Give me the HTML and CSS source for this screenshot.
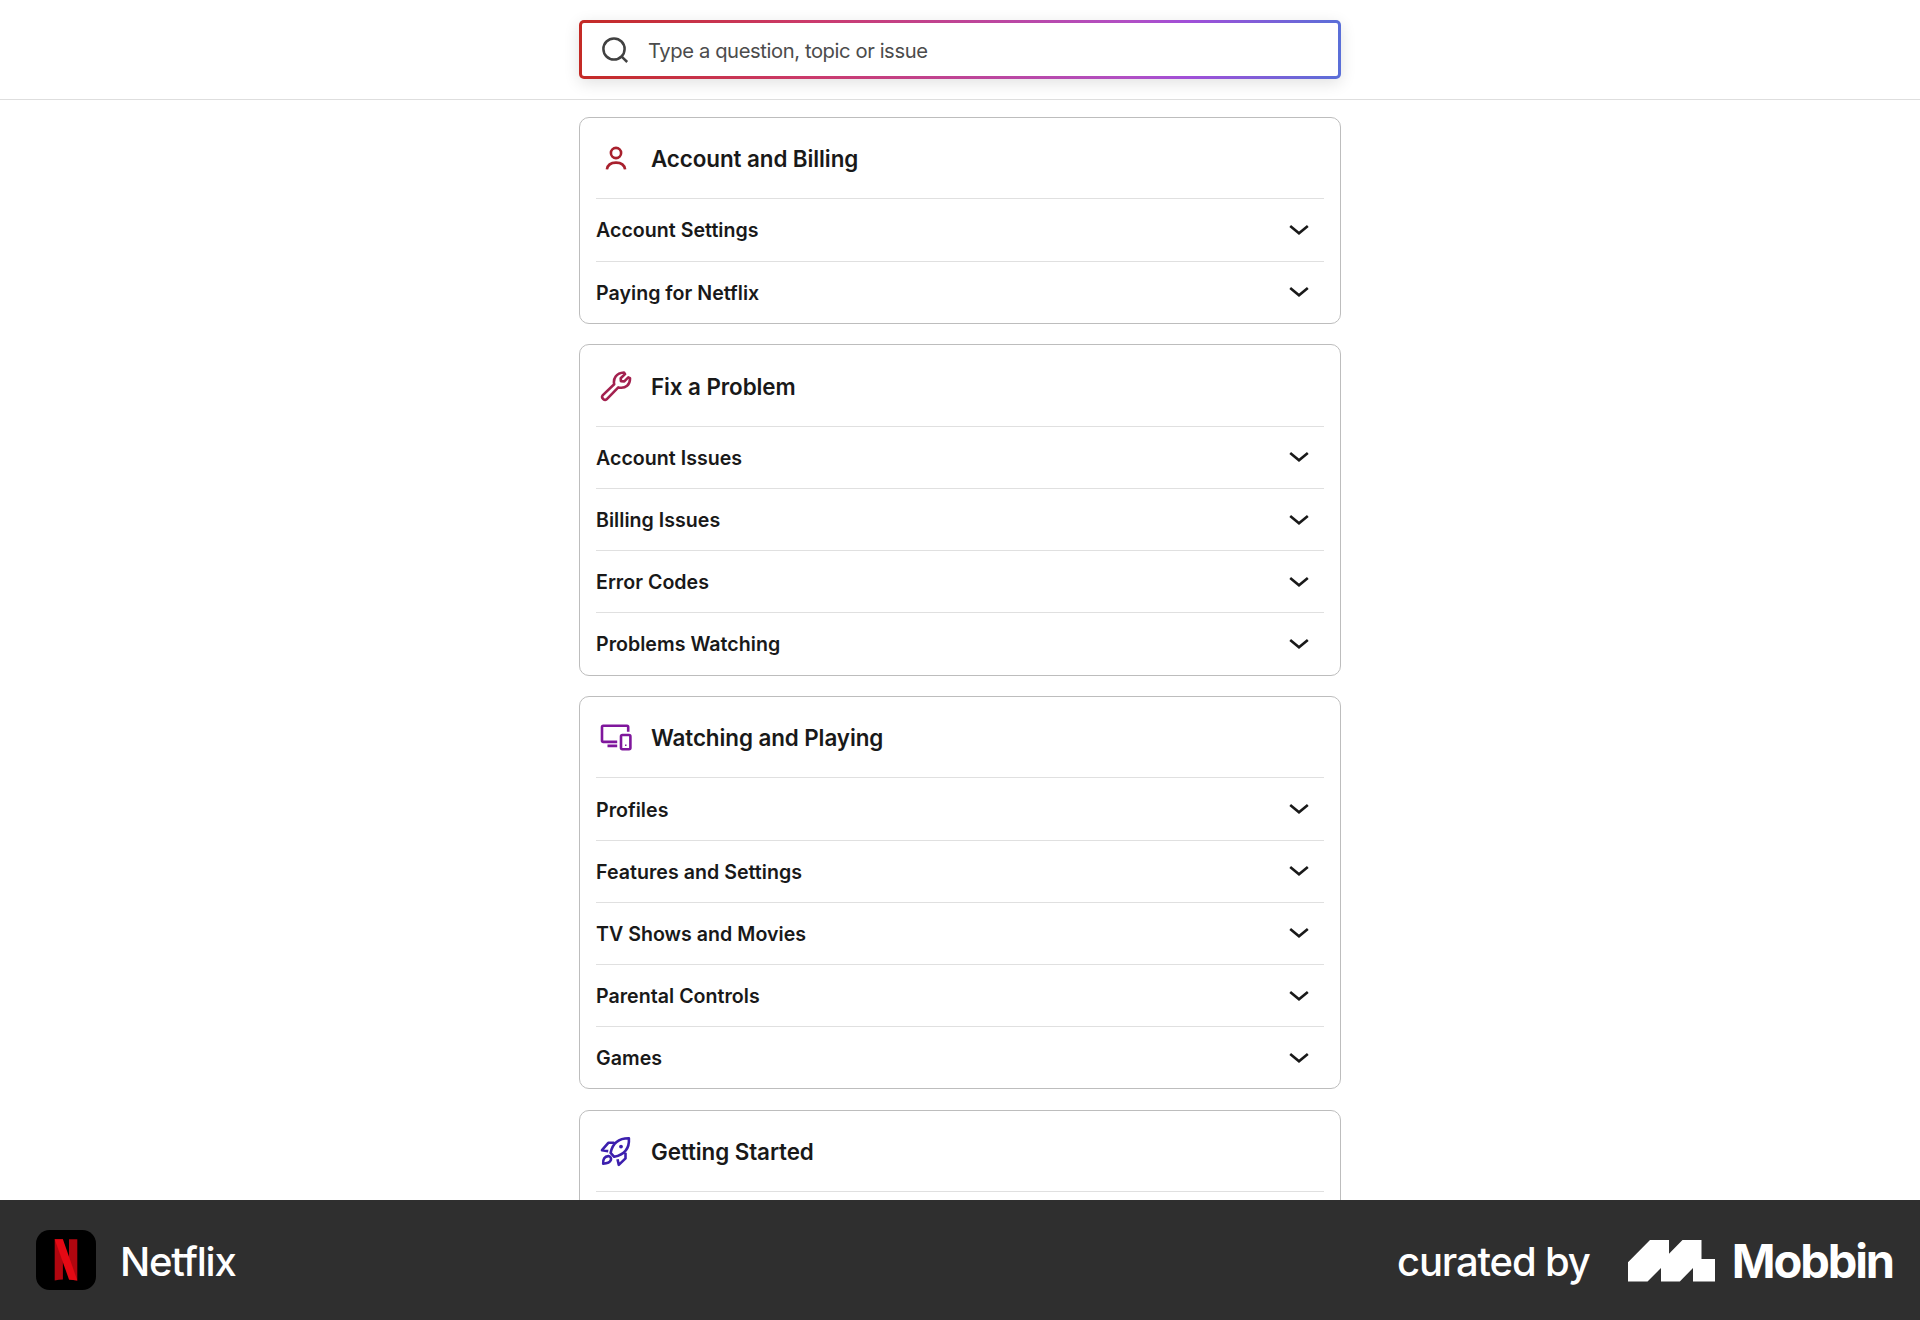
FILE: index.html
```html
<!DOCTYPE html>
<html lang="en">
<head>
<meta charset="utf-8">
<title>Netflix Help Center</title>
<link rel="stylesheet" href="styles.css">
</head>
<body>
<svg class="sprite" aria-hidden="true">
  <symbol id="chevron" viewBox="0 0 24 14"><path d="M3.2 3 12 10.3 20.8 3" fill="none" stroke="#191919" stroke-width="2.6"/></symbol>
</svg>
<div class="page">
  <header class="topbar">
    <div class="search">
      <svg class="search-icon" viewBox="0 0 32 32"><circle cx="15" cy="15" r="10.6"/><path d="M22.4 22.4 28.2 28"/></svg>
      <span class="placeholder">Type a question, topic or issue</span>
    </div>
  </header>
  <main class="topics">
    <section class="card">
      <h2 class="card-head">
        <svg class="icon account" viewBox="0 0 32 32"><circle cx="16" cy="11" r="5.1"/><path d="M6.9 27.4C7.6 22.8 11 20.6 16 20.6S24.4 22.8 25.1 27.4"/></svg>
        <span class="title">Account and Billing</span>
      </h2>
      <div class="row"><span class="label">Account Settings</span><svg class="chevron"><use href="#chevron"/></svg></div>
      <div class="row"><span class="label">Paying for Netflix</span><svg class="chevron"><use href="#chevron"/></svg></div>
    </section>
    <section class="card">
      <h2 class="card-head">
        <svg class="icon wrench" viewBox="0 0 32 32"><path d="M14.2 14.3C13 9 16 3 24 2.5L25 4.1 20.7 8.3 20.9 11.2 24.3 11.4 28.3 7.4 30 8.2C30.2 14.5 26 19 18.3 17.4L6.6 29.3C4.6 31 .8 28 2.6 25.4Z"/></svg>
        <span class="title">Fix a Problem</span>
      </h2>
      <div class="row"><span class="label">Account Issues</span><svg class="chevron"><use href="#chevron"/></svg></div>
      <div class="row"><span class="label">Billing Issues</span><svg class="chevron"><use href="#chevron"/></svg></div>
      <div class="row"><span class="label">Error Codes</span><svg class="chevron"><use href="#chevron"/></svg></div>
      <div class="row"><span class="label">Problems Watching</span><svg class="chevron"><use href="#chevron"/></svg></div>
    </section>
    <section class="card">
      <h2 class="card-head">
        <svg class="icon devices" viewBox="0 0 32 32"><path d="M17.2 20.9H3.2Q2 20.9 2 19.7V6Q2 4.8 3.2 4.8H27Q28.2 4.8 28.2 6V10.8M7.5 24.9H17.2"/><rect x="21" y="14" width="9.4" height="14.2" rx="1.4"/><path class="dot" d="M25 23.4h1.5v1.5H25z"/></svg>
        <span class="title">Watching and Playing</span>
      </h2>
      <div class="row"><span class="label">Profiles</span><svg class="chevron"><use href="#chevron"/></svg></div>
      <div class="row"><span class="label">Features and Settings</span><svg class="chevron"><use href="#chevron"/></svg></div>
      <div class="row"><span class="label">TV Shows and Movies</span><svg class="chevron"><use href="#chevron"/></svg></div>
      <div class="row"><span class="label">Parental Controls</span><svg class="chevron"><use href="#chevron"/></svg></div>
      <div class="row"><span class="label">Games</span><svg class="chevron"><use href="#chevron"/></svg></div>
    </section>
    <section class="card">
      <h2 class="card-head">
        <svg class="icon rocket" viewBox="0 0 32 32"><path d="M14.2 21.8 10.6 17.9C12.5 8.6 18 3.2 28.9 3.3 29.6 13.6 24 19.6 14.2 21.8ZM14.3 7.8H8.3L2 15.2 8.2 16.1M25.5 17.8V23.4L18.8 29.9 17.5 24.2M3.2 28.8C2.6 24.2 4.8 21 8.4 21.1 12.7 22 12.4 28.2 3.2 28.8Z"/><circle class="dot" cx="21" cy="11.6" r="1.9"/></svg>
        <span class="title">Getting Started</span>
      </h2>
      <div class="row"></div>
    </section>
  </main>
</div>
<footer class="credit">
  <svg class="app-logo" viewBox="0 0 60 60"><rect width="60" height="60" rx="13.5" fill="#000"/><path d="M18.7 9.2h8.2V49.6q-4 .2-8.2.8zM33 9.2h8.3V50.4L33 49.4z" fill="#b1060f"/><path d="M18.7 9.2h8.2L41.3 50.4 33 49.5z" fill="#e50914"/></svg>
  <span class="app-name">Netflix</span>
  <span class="curated">curated by</span>
  <svg class="mobbin-mark" viewBox="0 0 87 42"><path d="M22 0H41V13.7L54.5 0H73.5V19H87V41.5H65V28L51.8 41.5H33V28L19.5 41.5H0V22.3Z" fill="#fff"/></svg>
  <span class="mobbin">Mobbin</span>
</footer>
</body>
</html>
```
FILE: styles.css
```css
* { box-sizing: border-box; }
body {
  margin: 0;
  height: 1320px;
  display: flex;
  flex-direction: column;
  overflow: hidden;
  background: #fff;
  color: #191919;
  font-family: Inter, "Liberation Sans", sans-serif;
}
.sprite { display: none; }
.page { height: 1200px; overflow: hidden; }
.topbar {
  height: 100px;
  padding-top: 20px;
  border-bottom: 1px solid #dedede;
}
.search {
  width: 762px;
  height: 59px;
  margin: 0 auto;
  padding-left: 17px;
  display: flex;
  align-items: center;
  border: 3px solid transparent;
  border-radius: 5px;
  background:
    linear-gradient(#fff, #fff) padding-box,
    linear-gradient(90deg, #c42a25 0%, #cb3a6b 30%, #b14fc4 72%, #a04fd8 80%, #5a6fd8 100%) border-box;
  box-shadow: 0 4px 16px rgba(0, 0, 0, .12);
}
.search-icon {
  width: 32px;
  height: 32px;
  fill: none;
  stroke: #414141;
  stroke-width: 2.5;
}
.placeholder {
  margin-left: 17px;
  padding-top: 1px;
  color: #4c4c4c;
  font-size: 20.2px;
  letter-spacing: -.4px;
}
.topics {
  width: 762px;
  margin: 17px auto 0;
  display: flex;
  flex-direction: column;
  gap: 20.6px;
}
.card {
  padding: 0 16px;
  border: 1px solid #bdbdbd;
  border-radius: 10px;
}
.card-head {
  height: 80.4px;
  margin: 0;
  padding-left: 4px;
  display: flex;
  align-items: center;
  gap: 19px;
}
.title {
  padding-top: 1px;
  font-size: 22.4px;
  font-weight: 600;
  letter-spacing: -.08px;
}
.icon {
  width: 32px;
  height: 32px;
  fill: none;
  stroke-width: 2.6;
}
.icon .dot { stroke: none; }
.account { stroke: #a8202d; }
.wrench { stroke: #a3214f; stroke-linejoin: round; }
.devices { stroke: #7f169c; }
.devices .dot { fill: #7f169c; }
.rocket { stroke: #3c1fae; stroke-linejoin: round; }
.rocket .dot { fill: #3c1fae; }
.row {
  height: 62.2px;
  padding-right: 13px;
  display: flex;
  align-items: center;
  justify-content: space-between;
  border-top: 1px solid #e0e0e0;
  font-size: 19.6px;
  font-weight: 600;
  letter-spacing: .02px;
}
.label { padding-top: 1px; }
.chevron { width: 24px; height: 14px; }
.credit {
  height: 120px;
  padding: 0 27px 0 36px;
  display: flex;
  align-items: center;
  background: #2f2f2f;
  color: #fff;
  font-size: 40px;
  font-weight: 500;
}
.app-logo { width: 60px; height: 60px; }
.app-name { margin-left: 24px; padding-top: 2px; letter-spacing: -1.2px; }
.curated { margin-left: auto; padding-top: 2px; letter-spacing: -1.15px; }
.mobbin-mark { width: 87px; height: 42px; margin: 1px 0 0 38px; }
.mobbin {
  margin-left: 17px;
  font-size: 47px;
  font-weight: 700;
  letter-spacing: -2.1px;
}
```
